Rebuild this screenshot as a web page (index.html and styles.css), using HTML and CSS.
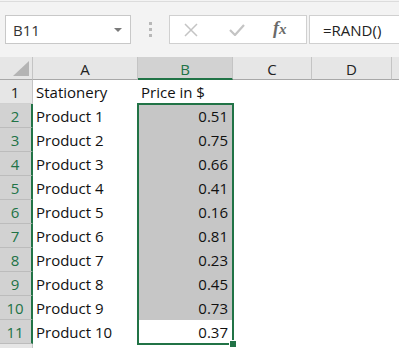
FILE: index.html
```html
<!DOCTYPE html>
<html>
<head>
<meta charset="utf-8">
<link rel="stylesheet" href="styles.css">
</head>
<body>
<div class="toolbar">
  <div class="namebox"><span class="nb-text">B11</span><span class="caret"></span></div>
  <div class="dots"><i></i><i></i><i></i></div>
  <div class="fbtns">
    <svg class="ico-x" width="14" height="14" viewBox="0 0 14 14"><path d="M1 1 L13 13 M13 1 L1 13" stroke="#c4c4c4" stroke-width="1.5" fill="none"/></svg>
    <svg class="ico-check" width="16" height="12" viewBox="0 0 16 12"><path d="M1 6 L6 11 L15 1" stroke="#c4c4c4" stroke-width="2.2" fill="none"/></svg>
    <span class="fx">f<span class="fx-x">x</span></span>
  </div>
  <div class="formula">=RAND()</div>
</div>
<div class="sheet">
  <div class="grid">
    <div class="corner"><span class="tri"></span></div>
    <div class="ch">A</div>
    <div class="ch ch-sel">B</div>
    <div class="ch">C</div>
    <div class="ch">D</div>
    <div class="ch ch-last"></div>

    <div class="rh">1</div><div class="c">Stationery</div><div class="c">Price in $</div><div class="c"></div><div class="c"></div><div class="c"></div>
    <div class="rh rh-sel">2</div><div class="c">Product 1</div><div class="c num fill">0.51</div><div class="c"></div><div class="c"></div><div class="c"></div>
    <div class="rh rh-sel">3</div><div class="c">Product 2</div><div class="c num fill">0.75</div><div class="c"></div><div class="c"></div><div class="c"></div>
    <div class="rh rh-sel">4</div><div class="c">Product 3</div><div class="c num fill">0.66</div><div class="c"></div><div class="c"></div><div class="c"></div>
    <div class="rh rh-sel">5</div><div class="c">Product 4</div><div class="c num fill">0.41</div><div class="c"></div><div class="c"></div><div class="c"></div>
    <div class="rh rh-sel">6</div><div class="c">Product 5</div><div class="c num fill">0.16</div><div class="c"></div><div class="c"></div><div class="c"></div>
    <div class="rh rh-sel">7</div><div class="c">Product 6</div><div class="c num fill">0.81</div><div class="c"></div><div class="c"></div><div class="c"></div>
    <div class="rh rh-sel">8</div><div class="c">Product 7</div><div class="c num fill">0.23</div><div class="c"></div><div class="c"></div><div class="c"></div>
    <div class="rh rh-sel">9</div><div class="c">Product 8</div><div class="c num fill">0.45</div><div class="c"></div><div class="c"></div><div class="c"></div>
    <div class="rh rh-sel">10</div><div class="c">Product 9</div><div class="c num fill">0.73</div><div class="c"></div><div class="c"></div><div class="c"></div>
    <div class="rh rh-sel">11</div><div class="c">Product 10</div><div class="c num">0.37</div><div class="c"></div><div class="c"></div><div class="c"></div>
  </div>
  <div class="selection"></div>
  <div class="handle"></div>
</div>
</body>
</html>
```

FILE: styles.css
```css
* { box-sizing: border-box; }
html, body {
  margin: 0;
  padding: 0;
  width: 399px;
  height: 348px;
  overflow: hidden;
  background: #f3f3f3;
  font-family: "Open Sans", "Liberation Sans", sans-serif;
}
.toolbar {
  display: flex;
  align-items: flex-start;
  padding: 13px 0 0 5px;
  background: #f3f3f3;
  border-top: 1px solid #dcdcdc;
  margin-top: 1px;
  height: 56px;
  width: 399px;
}
.toolbar > * { flex-shrink: 0; }
.namebox {
  width: 126px;
  height: 29px;
  background: #fff;
  border: 1px solid #c8c8c8;
  display: flex;
  align-items: center;
  justify-content: space-between;
  padding: 0 8px 0 7px;
  font-size: 15px;
  color: #333;
}
.caret {
  width: 0;
  height: 0;
  border-left: 4px solid transparent;
  border-right: 4px solid transparent;
  border-top: 4px solid #7a7a7a;
  margin-top: 1px;
}
.dots {
  width: 38px;
  height: 29px;
  display: flex;
  flex-direction: column;
  align-items: center;
  justify-content: center;
  gap: 3px;
}
.dots i {
  display: block;
  width: 3px;
  height: 3px;
  background: #b8b8b8;
}
.fbtns {
  width: 138px;
  height: 29px;
  background: #fff;
  border: 1px solid #d0d0d0;
  display: flex;
  align-items: center;
  padding-left: 14px;
}
.ico-x { margin-right: 31px; }
.ico-check { margin-right: 28px; margin-top: 1px; }
.fx {
  font-family: "Liberation Serif", serif;
  font-style: italic;
  font-weight: bold;
  font-size: 18px;
  color: #6a6a6a;
  margin-top: -2px;
}
.fx-x { font-size: 15px; }
.formula {
  margin-left: 2px;
  flex: 1 0 0;
  height: 29px;
  background: #fff;
  border: 1px solid #d0d0d0;
  border-right: none;
  display: flex;
  align-items: center;
  padding-left: 13px;
  font-size: 15px;
  color: #222;
}
.sheet {
  position: relative;
  background: #fff;
  height: 291px;
  overflow: hidden;
}
.grid {
  display: grid;
  grid-template-columns: 33px 105px 95px 79px 80px 1fr;
  grid-template-rows: 23px repeat(11, 24px) 24px;
  height: 311px;
}
.grid::after {
  content: "";
  background: #e6e6e6;
  border-right: 1px solid #c4c4c4;
}
.corner {
  background: #e6e6e6;
  border-right: 1px solid #c4c4c4;
  border-bottom: 1px solid #a8a8a8;
  position: relative;
}
.tri {
  position: absolute;
  right: 3px;
  bottom: 3px;
  width: 0;
  height: 0;
  border-left: 16px solid transparent;
  border-bottom: 15px solid #b4b4b4;
}
.ch {
  background: #e6e6e6;
  border-right: 1px solid #c4c4c4;
  border-bottom: 1px solid #a8a8a8;
  display: flex;
  align-items: center;
  justify-content: center;
  font-size: 15px;
  color: #222;
  padding-top: 2px;
}
.ch-last { border-right: none; }
.ch-sel {
  background: #d2d2d2;
  color: #217346;
  border-bottom: 2px solid #217346;
  padding-top: 3px;
}
.rh {
  background: #e6e6e6;
  border-right: 1px solid #c4c4c4;
  border-bottom: 1px solid #d0d0d0;
  display: flex;
  align-items: center;
  justify-content: center;
  font-size: 15px;
  color: #222;
  padding-right: 2px;
}
.rh-sel {
  background: #d2d2d2;
  color: #217346;
  border-right: 2px solid #217346;
  border-bottom-color: #bcbcbc;
  padding-right: 1px;
}
.c {
  display: flex;
  align-items: center;
  font-size: 15px;
  color: #111;
  padding-left: 3px;
  white-space: nowrap;
}
.num {
  justify-content: flex-end;
  padding-right: 5px;
}
.fill { background: #c6c6c6; }
.selection {
  position: absolute;
  left: 137px;
  top: 46px;
  width: 97px;
  height: 242px;
  border: 2px solid #217346;
  pointer-events: none;
}
.handle {
  position: absolute;
  left: 230px;
  top: 284px;
  width: 6px;
  height: 6px;
  background: #217346;
  outline: 1px solid #fff;
}
```
